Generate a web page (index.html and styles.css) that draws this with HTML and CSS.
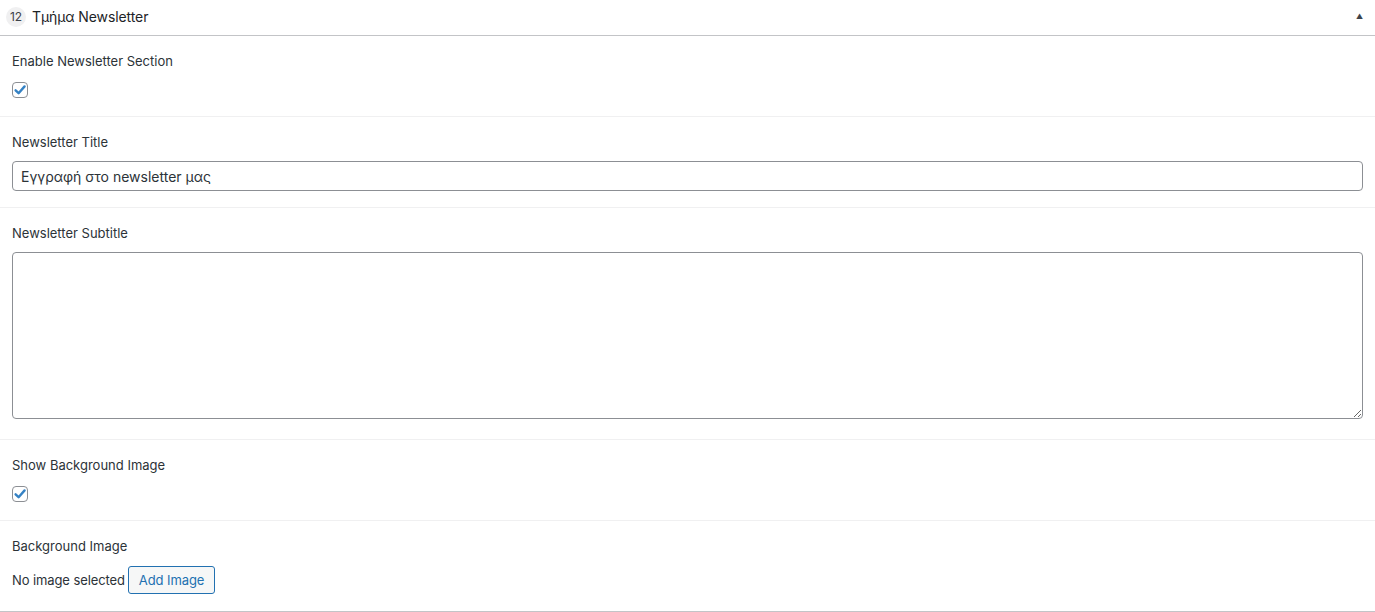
FILE: index.html
```html
<!DOCTYPE html>
<html lang="el">
<head>
<meta charset="utf-8">
<title>Τμήμα Newsletter</title>
<link rel="stylesheet" href="styles.css">
</head>
<body>
<div class="panel">
  <div class="panel-head">
    <span class="badge">12</span>
    <span class="panel-title">Τμήμα Newsletter</span>
    <span class="toggle">▲</span>
  </div>
  <div class="field">
    <div class="label">Enable Newsletter Section</div>
    <span class="check"><svg viewBox="0 0 16 16" width="16" height="16"><path d="M3.6 8.3 L6.6 11.2 L12.6 4.4" fill="none" stroke="#3582c4" stroke-width="2.4" stroke-linecap="round" stroke-linejoin="round"/></svg></span>
  </div>
  <div class="field">
    <div class="label">Newsletter Title</div>
    <input class="text" type="text" value="Εγγραφή στο newsletter μας">
  </div>
  <div class="field">
    <div class="label">Newsletter Subtitle</div>
    <textarea class="area"></textarea>
  </div>
  <div class="field">
    <div class="label">Show Background Image</div>
    <span class="check"><svg viewBox="0 0 16 16" width="16" height="16"><path d="M3.6 8.3 L6.6 11.2 L12.6 4.4" fill="none" stroke="#3582c4" stroke-width="2.4" stroke-linecap="round" stroke-linejoin="round"/></svg></span>
  </div>
  <div class="field last">
    <div class="label">Background Image</div>
    <div class="media-row">
      <span class="none">No image selected</span>
      <button class="btn" type="button">Add Image</button>
    </div>
  </div>
</div>
</body>
</html>
```
FILE: styles.css
```css
* { box-sizing: border-box; }
html, body { margin: 0; padding: 0; background: #fff; }
body {
  font-family: Inter, "Liberation Sans", sans-serif;
  font-size: 13px;
  color: #2c3338;
}
.panel { width: 1375px; }
.panel-head {
  height: 36px;
  display: flex;
  align-items: center;
  padding: 0 12px 2px 6px;
  border-bottom: 1px solid #c3c4c7;
}
.badge {
  width: 20px;
  height: 20px;
  border-radius: 50%;
  background: #f0f0f1;
  font-size: 12px;
  color: #3c434a;
  display: flex;
  align-items: center;
  justify-content: center;
  margin-right: 6px;
}
.panel-title { font-size: 14px; color: #1d2327; flex: 1; letter-spacing: -0.1px; }
.toggle { font-size: 7px; color: #3c434a; }
.field {
  display: flex;
  flex-direction: column;
  align-items: flex-start;
  padding: 16px 12px 16px;
  border-bottom: 1px solid #f0f0f1;
}
.field.last { border-bottom: 1px solid #c3c4c7; }
.label {
  line-height: 18px;
  color: #2c3338;
  margin-bottom: 10px;
}
.check {
  width: 16px;
  height: 16px;
  border: 1px solid #8c8f94;
  border-radius: 4px;
  margin: 2px 0 2px;
  display: flex;
  align-items: center;
  justify-content: center;
  background: #fff;
}
.check svg { display: block; flex: none; }
.text {
  width: 100%;
  height: 30px;
  border: 1px solid #8c8f94;
  border-radius: 4px;
  padding: 0 8px;
  font-family: inherit;
  font-size: 14px;
  color: #2c3338;
  background: #fff;
  margin: 0;
}
.area {
  width: 100%;
  height: 167px;
  border: 1px solid #8c8f94;
  border-radius: 4px;
  font-family: inherit;
  font-size: 14px;
  margin: 0 0 4px;
  display: block;
  resize: both;
}
.media-row {
  display: flex;
  align-items: center;
  gap: 3px;
  min-height: 30px;
  letter-spacing: -0.1px;
}
.none { color: #2c3338; }
.btn {
  height: 28px;
  padding: 0 10px;
  border: 1px solid #2271b1;
  border-radius: 3px;
  background: #f6f7f7;
  color: #2271b1;
  font-family: inherit;
  font-size: 13px;
  letter-spacing: -0.1px;
}
```
